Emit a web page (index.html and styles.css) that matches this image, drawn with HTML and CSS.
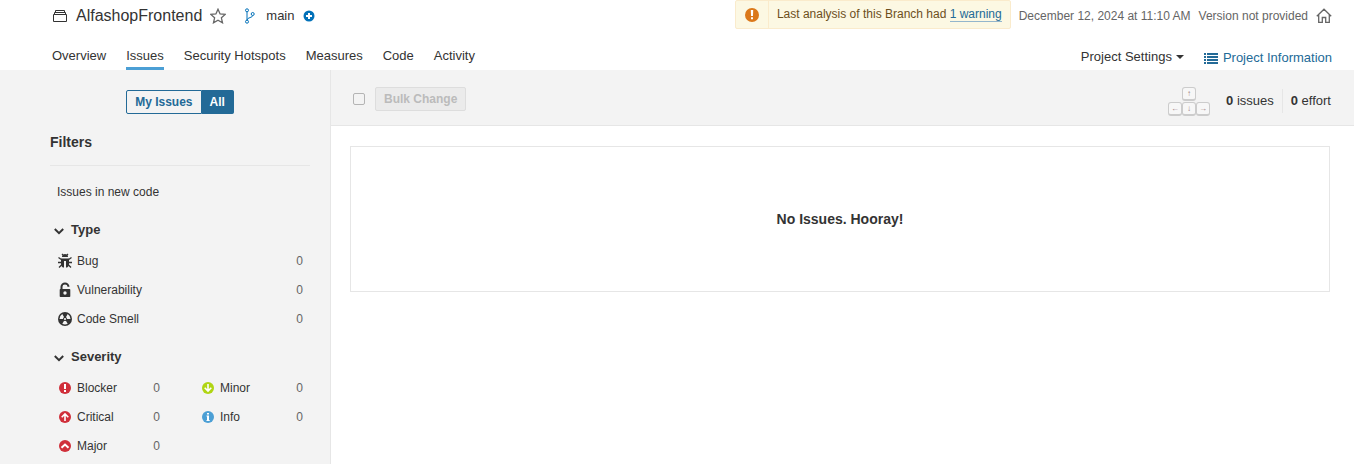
FILE: index.html
```html
<!DOCTYPE html>
<html lang="en">
<head>
<meta charset="utf-8">
<meta name="viewport" content="width=device-width, initial-scale=1">
<title>AlfashopFrontend - Issues</title>
<link rel="stylesheet" href="styles.css">
</head>
<body>
<header class="header">
  <div class="header-top">
    <div class="project">
      <svg class="icon" viewBox="0 0 16 16" fill="none" stroke="#333"><path d="M1.500 6.500h13v7h-13zM2.500 6V4.500h11V6M3.500 4V2.500h9V4"/></svg>
      <a class="project-name" href="#">AlfashopFrontend</a>
      <button class="icon-button" type="button" aria-label="Add to favorites"><svg class="icon" viewBox="0 0 16 16" fill="none" stroke="#666" stroke-width="1.300"><path d="M8 1.200l2.100 4.700 5.100.5-3.800 3.400 1.100 5L8 12.200l-4.500 2.600 1.100-5L.8 6.400l5.100-.5z"/></svg></button>
    </div>
    <div class="branch">
      <svg class="icon" viewBox="0 0 16 16" fill="none" stroke="#0271b9"><circle cx="5" cy="2.300" r="1.500"/><circle cx="5" cy="13.700" r="1.500"/><circle cx="10.700" cy="6" r="1.500"/><path d="M5 3.800v8.400M10.700 7.500C10.700 10 5.500 9 5 12"/></svg>
      <span class="branch-name">main</span>
      <button class="icon-button" type="button" aria-label="Add branch"><svg viewBox="0 0 12 12" width="12" height="12"><circle cx="6" cy="6" r="5.500" fill="#0271b9"/><path d="M6 3v6M3 6h6" stroke="#fff" stroke-width="2"/></svg></button>
    </div>
    <div class="meta">
      <div class="alert">
        <span class="alert-icon"><svg class="icon" viewBox="0 0 16 16"><circle cx="8" cy="8" r="7" fill="#db781a"/><path d="M6.800 3h2.400L9 9H7zM7 10.300h2v2H7z" fill="#fff"/></svg></span>
        <span class="alert-text">Last analysis of this Branch had <a href="#">1 warning</a></span>
      </div>
      <span>December 12, 2024 at 11:10 AM</span>
      <span>Version not provided</span>
      <button class="icon-button" type="button" aria-label="Set as homepage"><svg class="icon" viewBox="0 0 16 16" fill="none" stroke="#666" stroke-width="1.300"><path d="M.8 8.300L8 1.200l7.200 7.100M2.700 7v7.400h3.600V9.500h3.400v4.900h3.600V7"/></svg></button>
    </div>
  </div>
  <div class="header-nav">
    <nav class="tabs">
      <a href="#">Overview</a><a class="active" href="#" aria-current="page">Issues</a><a href="#">Security Hotspots</a><a href="#">Measures</a><a href="#">Code</a><a href="#">Activity</a>
    </nav>
    <div class="project-links">
      <button class="settings" type="button">Project Settings<svg width="8" height="4" viewBox="0 0 8 4"><path d="M0 0h8L4 4z" fill="#333"/></svg></button>
      <a class="info-link" href="#"><svg width="14" height="11" viewBox="0 0 14 11" fill="#236a97"><path d="M0 0h2v2H0zM3 0h11v2H3zM0 3h2v2H0zM3 3h11v2H3zM0 6h2v2H0zM3 6h11v2H3zM0 9h2v2H0zM3 9h11v2H3z"/></svg>Project Information</a>
    </div>
  </div>
</header>
<div class="page">
  <aside class="sidebar">
    <div class="switch"><button type="button">My Issues</button><button class="selected" type="button">All</button></div>
    <h2 class="filters-title">Filters</h2>
    <a class="period" href="#">Issues in new code</a>
    <section class="facet">
      <h3 class="facet-title"><svg width="10" height="12" viewBox="0 0 10 12" fill="none" stroke="#333" stroke-width="2"><path d="M.8 5L5 9.200 9.200 5"/></svg>Type</h3>
      <div class="facet-list">
        <a href="#"><svg class="icon" viewBox="0 0 16 16" fill="none" stroke="#333"><path d="M5 4a3 3 0 0 1 6 0zM4 5.500h8V11c0 1.800-1 3-2 3.500H6C5 14 4 12.800 4 11z" fill="#333" stroke="none"/><path d="M6 2L5 1M10 2l1-1M1.500 4.500L5 7M14.500 4.500L11 7M1 9.500h4M11 9.500h4M2 14.500L5 11.500M14 14.500l-3-3" stroke-width="1.300"/><path d="M8 8v7" stroke="#f3f3f3" stroke-width="2"/></svg><span>Bug</span><span class="count">0</span></a>
        <a href="#"><svg class="icon" viewBox="0 0 16 16"><path d="M4.500 8V4.800a3.500 3.300 0 0 1 7 0" fill="none" stroke="#333" stroke-width="2"/><path fill-rule="evenodd" d="M3.500 7h9q.8 0 .8.800v6.400q0 .8-.8.800h-9q-.8 0-.8-.8V7.800q0-.8.8-.8zM8 9.300a1.700 1.700 0 1 0 0 3.400 1.700 1.700 0 0 0 0-3.400z" fill="#333"/></svg><span>Vulnerability</span><span class="count">0</span></a>
        <a href="#"><svg class="icon" viewBox="0 0 16 16"><circle cx="8" cy="8" r="7" fill="#333"/><path d="M7 6L5.300 3.100Q2.700 4.700 2.500 8H6q0-1.200 1-2zM9 6l1.700-2.900q2.600 1.600 2.800 4.900H10q0-1.200-1-2zM7.100 9.700L5.300 12.700q2.700 1.400 5.400 0L8.900 9.700q-.9.500-1.800 0z" fill="#f3f3f3"/><circle cx="8" cy="8" r="1.100" fill="#f3f3f3"/></svg><span>Code Smell</span><span class="count">0</span></a>
      </div>
    </section>
    <section class="facet">
      <h3 class="facet-title"><svg width="10" height="12" viewBox="0 0 10 12" fill="none" stroke="#333" stroke-width="2"><path d="M.8 5L5 9.200 9.200 5"/></svg>Severity</h3>
      <div class="facet-list two-columns">
        <a href="#"><svg class="icon" viewBox="0 0 16 16"><circle cx="8" cy="8" r="6" fill="#d02f3a"/><path d="M7 4h2v5H7zM7 10h2v2H7z" fill="#fff"/></svg><span>Blocker</span><span class="count">0</span></a>
        <a href="#"><svg class="icon" viewBox="0 0 16 16"><circle cx="8" cy="8" r="6" fill="#d02f3a"/><path d="M8 12V5M4.700 8.300L8 5l3.300 3.300" fill="none" stroke="#fff" stroke-width="1.600"/></svg><span>Critical</span><span class="count">0</span></a>
        <a href="#"><svg class="icon" viewBox="0 0 16 16"><circle cx="8" cy="8" r="6" fill="#d02f3a"/><path d="M4.500 9.700L8 6.500l3.500 3.200" fill="none" stroke="#fff" stroke-width="2"/></svg><span>Major</span><span class="count">0</span></a>
        <a href="#"><svg class="icon" viewBox="0 0 16 16"><circle cx="8" cy="8" r="6" fill="#b0d513"/><path d="M8 4v7M4.700 7.700L8 11l3.300-3.300" fill="none" stroke="#fff" stroke-width="1.600"/></svg><span>Minor</span><span class="count">0</span></a>
        <a href="#"><svg class="icon" viewBox="0 0 16 16"><circle cx="8" cy="8" r="6" fill="#4b9fd5"/><path d="M7 4h2v1.500H7zM6.500 6.500H9V11h.7v1H6.500v-1H7V7.500h-.5z" fill="#fff"/></svg><span>Info</span><span class="count">0</span></a>
      </div>
    </section>
  </aside>
  <main class="main">
    <div class="toolbar">
      <input class="check-all" type="checkbox" aria-label="Select all issues">
      <button class="bulk" type="button" disabled>Bulk Change</button>
      <div class="totals">
        <div class="keys" aria-hidden="true"><kbd class="up">↑</kbd><kbd>←</kbd><kbd>↓</kbd><kbd>→</kbd></div>
        <div class="total"><strong>0</strong> issues</div>
        <div class="total effort"><strong>0</strong> effort</div>
      </div>
    </div>
    <div class="empty"><h3>No Issues. Hooray!</h3></div>
  </main>
</div>
</body>
</html>
```
FILE: styles.css
```css
* { box-sizing: border-box; }
body {
  margin: 0;
  min-height: 100vh;
  display: flex;
  flex-direction: column;
  background: #fff;
  color: #333;
  font: 13px/20px "Liberation Sans", Arial, sans-serif;
}
a { color: inherit; text-decoration: none; }
button { font: inherit; color: inherit; cursor: pointer; }
svg { display: block; flex: none; }
h2, h3 { margin: 0; font-weight: 700; }
.icon { width: 16px; height: 16px; }
.icon-button { padding: 0; border: 0; background: none; }

.header { padding: 0 22px 0 52px; }
.header-top { display: flex; height: 32px; align-items: center; }
.project { display: flex; align-items: center; gap: 8px; }
.project-name { font-size: 16px; }
.branch { display: flex; align-items: center; margin-left: 16px; }
.branch-name { margin: 0 8px; }
.meta {
  display: flex;
  align-items: center;
  align-self: stretch;
  gap: 8px;
  margin-left: auto;
  color: #656565;
  font-size: 12px;
  white-space: nowrap;
}
.alert {
  display: flex;
  height: 29px;
  align-self: flex-start;
  border: 1px solid #faebcc;
  border-radius: 2px;
  background: #fcf8e3;
  color: #6d4f1c;
}
.alert-icon { display: flex; align-items: center; padding: 0 8px; border-right: 1px solid #faebcc; }
.alert-text { padding: 3px 8px; }
.alert-text a { color: #236a97; border-bottom: 1px solid #94b6cc; }
.header-nav { display: flex; justify-content: space-between; height: 38px; }
.tabs { display: flex; gap: 20px; }
.tabs a { height: 38px; padding-top: 14px; border-bottom: 3px solid transparent; }
.tabs .active { border-color: #4b9fd5; }
.project-links { display: flex; align-items: center; gap: 20px; padding-top: 12px; }
.settings { display: flex; align-items: center; gap: 4px; padding: 0; border: 0; background: none; }
.info-link { display: flex; align-items: center; gap: 5px; padding-top: 2px; color: #236a97; }

.page { display: flex; flex: 1; }
.sidebar {
  flex: 0 0 331px;
  padding: 20px 20px 0 50px;
  border-right: 1px solid #e6e6e6;
  background: #f3f3f3;
}
.switch { display: flex; justify-content: center; }
.switch button {
  height: 24px;
  padding: 0 8px;
  border: 1px solid #236a97;
  border-radius: 2px 0 0 2px;
  background: transparent;
  color: #236a97;
  font-size: 12px;
  font-weight: 700;
}
.switch .selected { border-left: 0; border-radius: 0 2px 2px 0; background: #236a97; color: #fff; }
.filters-title {
  margin-top: 18px;
  padding-bottom: 13px;
  border-bottom: 1px solid #e6e6e6;
  font-size: 14px;
}
.period { display: block; padding: 16px 7px 4px; font-size: 12px; }
.facet { margin-top: 14px; }
.facet-title { display: flex; align-items: center; gap: 7px; padding-left: 4px; font-size: 13px; }
.facet-list { display: grid; grid-auto-rows: 29px; margin-top: 6px; font-size: 12px; }
.facet-list a { display: flex; align-items: center; gap: 4px; padding: 0 7px; }
.count { margin-left: auto; color: #656565; }
.two-columns {
  grid-template: repeat(3, 29px) / 1fr 1fr;
  grid-auto-flow: column;
  column-gap: 26px;
}

.main { flex: 1; min-width: 0; }
.toolbar {
  display: flex;
  align-items: center;
  height: 56px;
  padding: 2px 23px 0 22px;
  border-bottom: 1px solid #e6e6e6;
  background: #f3f3f3;
}
.check-all {
  appearance: none;
  width: 12px;
  height: 12px;
  margin: 0 10px 0 0;
  border: 1px solid #b4b4b4;
  border-radius: 2px;
}
.bulk {
  height: 24px;
  padding: 0 8px;
  border: 1px solid #ddd;
  border-radius: 2px;
  background: #ebebeb;
  color: #bbb;
  font-size: 12px;
  font-weight: 700;
}
.totals { display: flex; align-items: center; margin-left: auto; padding-top: 4px; }
.keys {
  display: grid;
  grid-template-columns: repeat(3, 14px);
  gap: 1px 0;
  padding-top: 2px;
}
.keys kbd {
  height: 14px;
  border: 1px solid #ccc;
  border-bottom-width: 2px;
  border-radius: 3px;
  background: #f7f7f7;
  color: #a08080;
  font: 8px/11px "Liberation Sans", Arial, sans-serif;
  text-align: center;
}
.keys .up { grid-column: 2; }
.keys .up + kbd { grid-column: 1; }
.total { margin-left: 16px; line-height: 24px; }
.effort { margin-left: 8px; padding-left: 8px; border-left: 1px solid #e6e6e6; }
.empty {
  margin: 20px 24px 0 19px;
  padding: 62px 16px;
  border: 1px solid #e6e6e6;
  text-align: center;
}
.empty h3 { font-size: 14px; }
```
